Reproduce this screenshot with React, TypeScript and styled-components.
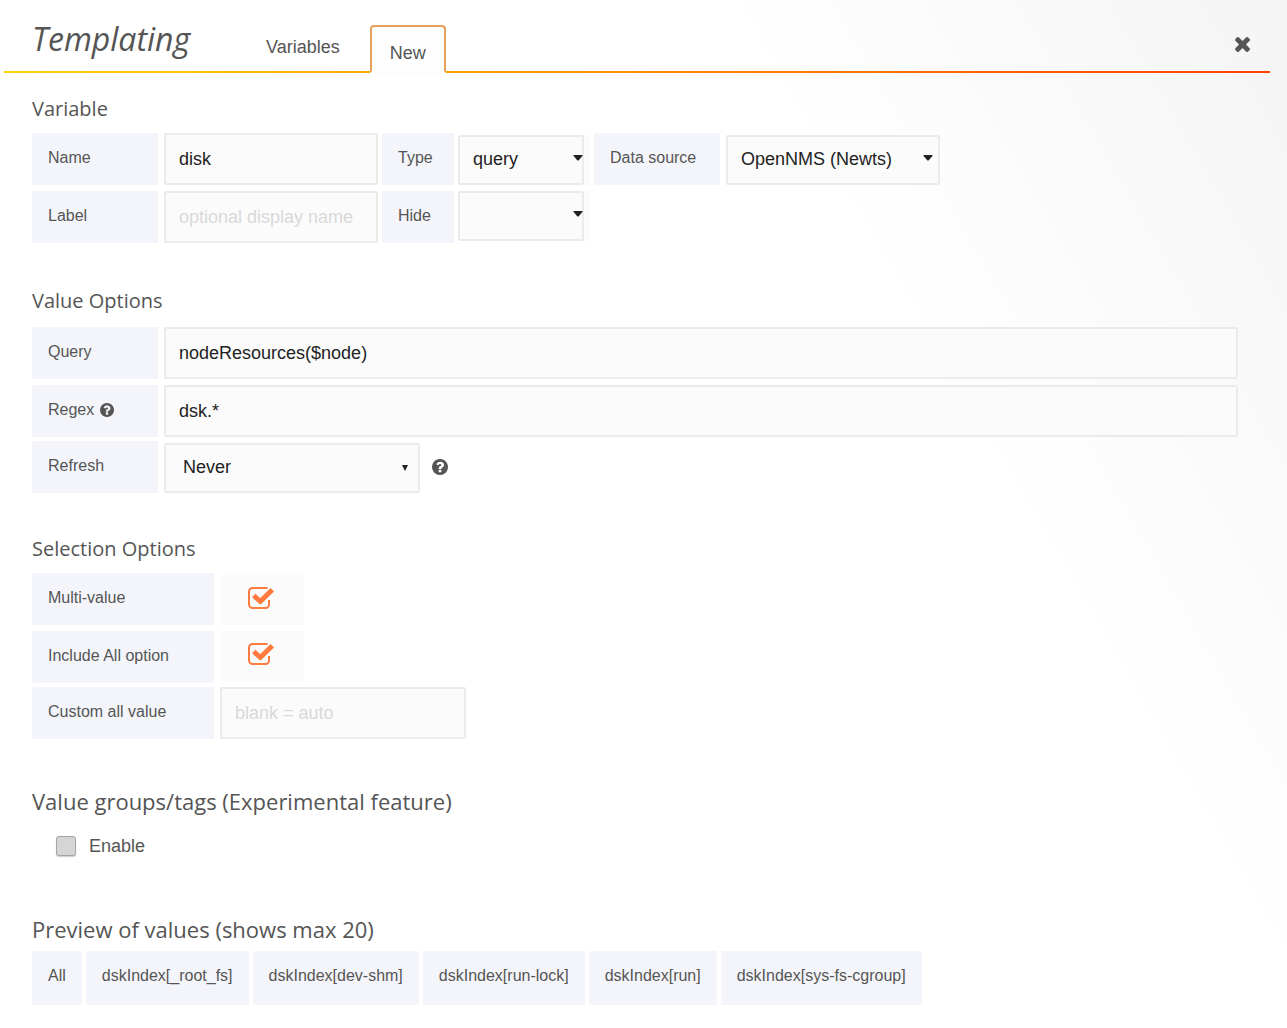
import React, { useState } from "react";
import styled, { createGlobalStyle } from "styled-components";

const sans = `"Liberation Sans", Arial, Helvetica, sans-serif`;
const display = `"Open Sans", "Noto Sans", sans-serif`;
const ink = "#555";

const GlobalStyle = createGlobalStyle`
  *, *::before, *::after { box-sizing: border-box; }
  html { min-height: 100%; background: #fff linear-gradient(60deg, transparent 70%, #f5f5f5 98%); }
  body { margin: 0; color: ${ink}; font-family: ${sans}; font-size: 18px; }
`;

const Header = styled.header`
  display: flex;
  align-items: flex-end;
  height: 73px;
  margin: 0 17px 0 4px;
  padding-left: 28px;
  background: linear-gradient(to right, #ffd500 0%, #ff4400 99%) left bottom / 100% 2px no-repeat;
`;

const Title = styled.h1`
  width: 214px;
  margin: 0;
  padding-bottom: 9px;
  font: italic 400 32px/50px ${display};
`;

const Tabs = styled.nav`
  display: flex;
  align-items: flex-end;
  gap: 10px;
`;

const Tab = styled.button<{ $active?: boolean }>`
  height: ${(p) => (p.$active ? 48 : 52)}px;
  padding: ${(p) => (p.$active ? 4 : 0)}px 18px 0;
  color: ${ink};
  font: 18px/44px ${sans};
  background: ${(p) => (p.$active ? "#fefefe" : "transparent")};
  border: 2px solid ${(p) => (p.$active ? "#e5a05a" : "transparent")};
  border-bottom-color: ${(p) => (p.$active ? "#fbfbfb" : "transparent")};
  border-radius: 4px 4px 0 0;
`;

const CloseButton = styled.button`
  display: flex;
  margin: 0 20px 21px auto;
  padding: 0;
  color: ${ink};
  background: none;
  border: 0;
`;

const Page = styled.main`
  padding: 22px 49px 22px 32px;
`;

const Section = styled.section<{ $gap?: number }>`
  margin-bottom: ${(p) => p.$gap ?? 0}px;
`;

const Heading = styled.h2<{ $space?: number; $large?: boolean }>`
  margin: 0 0 ${(p) => p.$space ?? 10}px;
  font: 400 ${(p) => (p.$large ? 22 : 20)}px/28px ${display};
`;

const Row = styled.div<{ $align?: string; $tight?: boolean }>`
  display: flex;
  align-items: ${(p) => p.$align ?? "flex-end"};
  &:not(:first-of-type) { margin-top: ${(p) => (p.$tight ? 4 : 6)}px; }
`;

const Label = styled.label<{ $width: number }>`
  display: flex;
  flex: none;
  align-items: center;
  gap: 6px;
  width: ${(p) => p.$width}px;
  height: 52px;
  padding: 0 0 2px 16px;
  font-size: 16px;
  background: #f4f5fa;
  border-radius: 2px 0 0 2px;
`;

const Field = styled.input<{ $width?: number; $after?: number }>`
  flex: ${(p) => (p.$width ? "none" : "1")};
  width: ${(p) => (p.$width ? `${p.$width}px` : "auto")};
  min-width: 0;
  height: 52px;
  margin: 0 ${(p) => p.$after ?? 0}px 0 6px;
  padding: 0 13px;
  color: #222;
  font: 18px ${sans};
  background: #fbfbfb;
  border: 2px solid #ebebeb;
  border-radius: 2px;
  &::placeholder { color: #d9d9d9; opacity: 1; }
`;

const SelectBox = styled.div<{ $width: number; $before?: number; $tail?: number }>`
  position: relative;
  flex: none;
  width: ${(p) => p.$width + (p.$tail ?? 0)}px;
  margin: 0 ${(p) => (p.$tail ? 4 : 0)}px 0 ${(p) => p.$before ?? 6}px;
  padding-right: ${(p) => p.$tail ?? 0}px;
  background: #fbfbfb;
`;

const NativeSelect = styled.select<{ $inset: number }>`
  display: block;
  width: 100%;
  height: 50px;
  padding: 0 0 2px ${(p) => p.$inset}px;
  color: #222;
  font: 18px ${sans};
  appearance: none;
  background: transparent;
  border: 2px solid #ebebeb;
  border-radius: 2px;
`;

const Arrow = styled.svg<{ $right: number }>`
  position: absolute;
  top: 20px;
  right: ${(p) => p.$right}px;
  pointer-events: none;
  fill: #222;
`;

const HelpButton = styled.button`
  display: flex;
  align-self: center;
  margin-left: 12px;
  padding: 0;
  color: ${ink};
  background: none;
  border: 0;
`;

const TickBox = styled.span`
  display: flex;
  position: relative;
  align-items: center;
  justify-content: center;
  width: 84px;
  height: 50px;
  margin-left: 6px;
  padding-bottom: 4px;
  background: #fbfbfb;
`;

const TickInput = styled.input`
  position: absolute;
  inset: 0;
  width: 100%;
  height: 100%;
  margin: 0;
  opacity: 0;
`;

const EnableLabel = styled.label`
  display: flex;
  align-items: center;
  gap: 13px;
  height: 42px;
  padding-left: 24px;
`;

const PlainCheck = styled.input`
  width: 20px;
  height: 20px;
  margin: 0;
  appearance: none;
  background: #d5d5d5;
  border: 1px solid #a5a5a5;
  border-radius: 3px;
  box-shadow: 0 1px 1px #ccc;
  &:checked { background: #ff7b3d; }
`;

const Values = styled.ul`
  display: flex;
  flex-wrap: wrap;
  gap: 4px;
  margin: 0;
  padding: 0;
  list-style: none;
`;

const Value = styled.li`
  height: 54px;
  padding: 0 16px;
  font-size: 16px;
  line-height: 50px;
  background: #f4f5fa;
  border-radius: 2px;
`;

function Help({ size }: { size: number }) {
  return (
    <svg width={size} height={size} viewBox="128 128 1536 1536" fill="currentColor" aria-hidden="true">
      <path d="M1024 1376v-192q0-14-9-23t-23-9h-192q-14 0-23 9t-9 23v192q0 14 9 23t23 9h192q14 0 23-9t9-23zm256-672q0-88-55.5-163t-138.5-116-170-41q-243 0-371 213-15 24 8 42l132 100q7 6 19 6 16 0 25-12 53-68 86-92 34-24 86-24 48 0 85.5 26t37.5 59q0 38-20 61t-68 45q-63 28-115.5 86.5t-52.5 125.5v36q0 14 9 23t23 9h192q14 0 23-9t9-23q0-19 21.5-49.5t54.5-49.5q32-18 49-28.5t46-35 44.5-48 28-60.5 12.5-81zm384 192q0 209-103 385.5t-279.5 279.5-385.5 103-385.5-103-279.5-279.5-103-385.5 103-385.5 279.5-279.5 385.5-103 385.5 103 279.5 279.5 103 385.5z" />
    </svg>
  );
}

interface SelectProps {
  id: string;
  width: number;
  options: string[];
  before?: number;
  tail?: number;
  inset?: number;
  arrowRight: number;
  small?: boolean;
}

function Select({ id, width, options, before, tail, inset = 13, arrowRight, small }: SelectProps) {
  return (
    <SelectBox $width={width} $before={before} $tail={tail}>
      <NativeSelect id={id} $inset={inset}>
        {options.map((o) => (
          <option key={o}>{o}</option>
        ))}
      </NativeSelect>
      {small ? (
        <Arrow $right={arrowRight} width="6" height="10" viewBox="0 0 6 10">
          <path d="M0 2h6L3 8z" />
        </Arrow>
      ) : (
        <Arrow $right={arrowRight} width="10" height="6" viewBox="0 0 10 6">
          <path d="M1 0h8q1 0 .4.9L5.800 5.200q-.8.8-1.600 0L.6.9Q0 0 1 0z" />
        </Arrow>
      )}
    </SelectBox>
  );
}

function Tick({ id }: { id: string }) {
  const [on, setOn] = useState(true);
  return (
    <TickBox>
      <TickInput id={id} type="checkbox" checked={on} onChange={() => setOn(!on)} />
      <svg width="28" height="22" viewBox="0 0 28 22" fill="none" stroke="#ff7b3d" aria-hidden="true">
        <path strokeWidth="2" d="M19.500 1H4.500A3.500 3.500 0 0 0 1 4.500v13A3.500 3.500 0 0 0 4.500 21h13a3.500 3.500 0 0 0 3.500-3.500V13" />
        {on && <path strokeWidth="5" strokeLinejoin="round" d="M5.800 8.500l6.500 6L24.300 2.800" />}
      </svg>
    </TickBox>
  );
}

const values = [
  "All",
  "dskIndex[_root_fs]",
  "dskIndex[dev-shm]",
  "dskIndex[run-lock]",
  "dskIndex[run]",
  "dskIndex[sys-fs-cgroup]",
];

export default function App() {
  return (
    <>
      <GlobalStyle />
      <Header>
        <Title>Templating</Title>
        <Tabs>
          <Tab type="button">Variables</Tab>
          <Tab type="button" $active>New</Tab>
        </Tabs>
        <CloseButton type="button" aria-label="Close">
          <svg width="15" height="15" viewBox="110 366 1188 1188" fill="currentColor">
            <path d="M1298 1322q0 40-28 68l-136 136q-28 28-68 28t-68-28l-294-294-294 294q-28 28-68 28t-68-28l-136-136q-28-28-28-68t28-68l294-294-294-294q-28-28-28-68t28-68l136-136q28-28 68-28t68 28l294 294 294-294q28-28 68-28t68 28l136 136q28 28 28 68t-28 68l-294 294 294 294q28 28 28 68z" />
          </svg>
        </CloseButton>
      </Header>
      <Page>
        <Section $gap={44}>
          <Heading>Variable</Heading>
          <Row>
            <Label $width={126} htmlFor="name">Name</Label>
            <Field id="name" $width={214} $after={4} defaultValue="disk" />
            <Label $width={72} htmlFor="type">Type</Label>
            <Select id="type" width={126} before={4} tail={6} arrowRight={7} options={["query", "interval", "custom"]} />
            <Label $width={126} htmlFor="source">Data source</Label>
            <Select id="source" width={214} arrowRight={7} options={["OpenNMS (Newts)"]} />
          </Row>
          <Row $align="flex-start">
            <Label $width={126} htmlFor="label">Label</Label>
            <Field id="label" $width={214} $after={4} placeholder="optional display name" />
            <Label $width={72} htmlFor="hide">Hide</Label>
            <Select id="hide" width={126} before={4} tail={6} arrowRight={7} options={["", "Label", "Variable"]} />
          </Row>
        </Section>
        <Section $gap={42}>
          <Heading $space={12}>Value Options</Heading>
          <Row>
            <Label $width={126} htmlFor="query">Query</Label>
            <Field id="query" defaultValue="nodeResources($node)" />
          </Row>
          <Row>
            <Label $width={126} htmlFor="regex">Regex <Help size={14} /></Label>
            <Field id="regex" defaultValue="dsk.*" />
          </Row>
          <Row $tight>
            <Label $width={126} htmlFor="refresh">Refresh</Label>
            <Select id="refresh" width={256} inset={17} arrowRight={12} small options={["Never", "On Dashboard Load"]} />
            <HelpButton type="button" aria-label="Refresh help"><Help size={16} /></HelpButton>
          </Row>
        </Section>
        <Section $gap={48}>
          <Heading>Selection Options</Heading>
          <Row>
            <Label $width={182} htmlFor="multi">Multi-value</Label>
            <Tick id="multi" />
          </Row>
          <Row $align="flex-start">
            <Label $width={182} htmlFor="include-all">Include All option</Label>
            <Tick id="include-all" />
          </Row>
          <Row $tight>
            <Label $width={182} htmlFor="custom-all">Custom all value</Label>
            <Field id="custom-all" $width={246} placeholder="blank = auto" />
          </Row>
        </Section>
        <Section $gap={48}>
          <Heading $large>Value groups/tags (Experimental feature)</Heading>
          <EnableLabel>
            <PlainCheck type="checkbox" />
            Enable
          </EnableLabel>
        </Section>
        <Section>
          <Heading $large $space={8}>Preview of values (shows max 20)</Heading>
          <Values>
            {values.map((v) => (
              <Value key={v}>{v}</Value>
            ))}
          </Values>
        </Section>
      </Page>
    </>
  );
}
